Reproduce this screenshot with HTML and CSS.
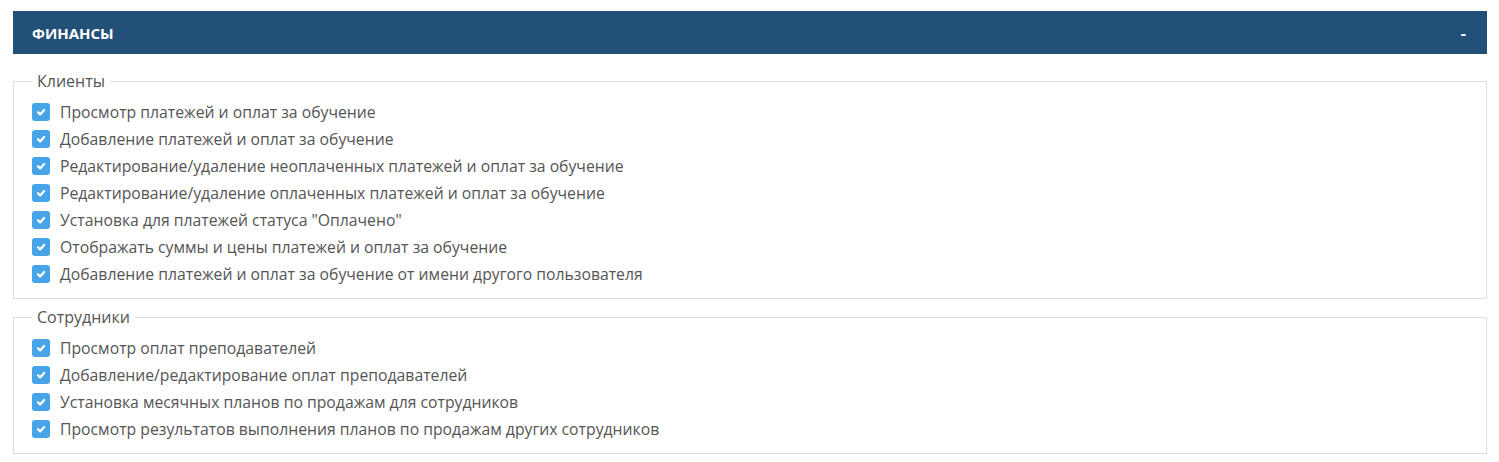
FILE: index.html
```html
<!DOCTYPE html>
<html lang="ru">
<head>
<meta charset="utf-8">
<link rel="stylesheet" href="styles.css">
</head>
<body>
<div class="panel">
  <div class="panel-head">
    <span class="panel-title">ФИНАНСЫ</span>
    <span class="panel-toggle">-</span>
  </div>
  <div class="panel-body">
    <fieldset class="group">
      <legend>Клиенты</legend>
      <label class="item"><span class="cb"><svg viewBox="0 0 10 10"><path d="M2.5 5.2 L4.3 7 L7.6 3.4" /></svg></span>Просмотр платежей и оплат за обучение</label>
      <label class="item"><span class="cb"><svg viewBox="0 0 10 10"><path d="M2.5 5.2 L4.3 7 L7.6 3.4" /></svg></span>Добавление платежей и оплат за обучение</label>
      <label class="item"><span class="cb"><svg viewBox="0 0 10 10"><path d="M2.5 5.2 L4.3 7 L7.6 3.4" /></svg></span>Редактирование/удаление неоплаченных платежей и оплат за обучение</label>
      <label class="item"><span class="cb"><svg viewBox="0 0 10 10"><path d="M2.5 5.2 L4.3 7 L7.6 3.4" /></svg></span>Редактирование/удаление оплаченных платежей и оплат за обучение</label>
      <label class="item"><span class="cb"><svg viewBox="0 0 10 10"><path d="M2.5 5.2 L4.3 7 L7.6 3.4" /></svg></span>Установка для платежей статуса "Оплачено"</label>
      <label class="item"><span class="cb"><svg viewBox="0 0 10 10"><path d="M2.5 5.2 L4.3 7 L7.6 3.4" /></svg></span>Отображать суммы и цены платежей и оплат за обучение</label>
      <label class="item"><span class="cb"><svg viewBox="0 0 10 10"><path d="M2.5 5.2 L4.3 7 L7.6 3.4" /></svg></span>Добавление платежей и оплат за обучение от имени другого пользователя</label>
    </fieldset>
    <fieldset class="group">
      <legend>Сотрудники</legend>
      <label class="item"><span class="cb"><svg viewBox="0 0 10 10"><path d="M2.5 5.2 L4.3 7 L7.6 3.4" /></svg></span>Просмотр оплат преподавателей</label>
      <label class="item"><span class="cb"><svg viewBox="0 0 10 10"><path d="M2.5 5.2 L4.3 7 L7.6 3.4" /></svg></span>Добавление/редактирование оплат преподавателей</label>
      <label class="item"><span class="cb"><svg viewBox="0 0 10 10"><path d="M2.5 5.2 L4.3 7 L7.6 3.4" /></svg></span>Установка месячных планов по продажам для сотрудников</label>
      <label class="item"><span class="cb"><svg viewBox="0 0 10 10"><path d="M2.5 5.2 L4.3 7 L7.6 3.4" /></svg></span>Просмотр результатов выполнения планов по продажам других сотрудников</label>
    </fieldset>
  </div>
</div>
</body>
</html>
```
FILE: styles.css
```css
html, body {
  margin: 0;
  padding: 0;
  background: #ffffff;
}
body {
  padding: 11px 12px 0 13px;
  font-family: "Open Sans", "Liberation Sans", sans-serif;
}
.panel-head {
  height: 43px;
  background: #235079;
  display: flex;
  align-items: center;
  justify-content: space-between;
  padding: 0 21px 0 19px;
  color: #ffffff;
}
.panel-title {
  font-size: 15px;
  font-weight: 700;
}
.panel-toggle {
  font-size: 16px;
  font-weight: 700;
}
.panel-body {
  padding-top: 17px;
  display: flex;
  flex-direction: column;
  gap: 8px;
}
.group {
  margin: 0;
  border: 1px solid #dddddd;
  padding: 7.5px 18px 10.5px 18px;
  display: flex;
  flex-direction: column;
}
.group legend {
  font-size: 16px;
  color: #555555;
  padding: 0 5px;
  margin-left: 0;
  line-height: 20px;
}
.item {
  display: flex;
  align-items: center;
  height: 27px;
  font-size: 15.75px;
  color: #555555;
}
.cb {
  width: 18px;
  height: 18px;
  border-radius: 3px;
  background: #47a4e8;
  margin-right: 10px;
  display: inline-flex;
  align-items: center;
  justify-content: center;
  flex: none;
}
.cb svg {
  width: 12px;
  height: 12px;
  fill: none;
  stroke: #ffffff;
  stroke-width: 1.9;
  stroke-linecap: round;
  stroke-linejoin: round;
}
```
